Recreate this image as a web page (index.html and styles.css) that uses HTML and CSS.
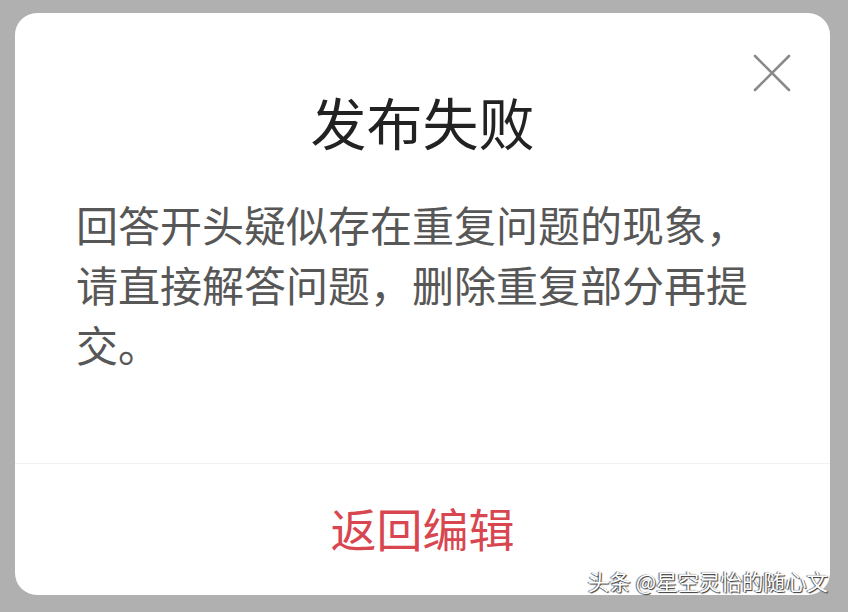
FILE: index.html
```html
<!DOCTYPE html>
<html lang="zh-CN">

<head>
    <meta charset="UTF-8">
    <meta name="viewport" content="width=device-width, initial-scale=1.0">
    <title>发布失败</title>
    <link rel="stylesheet" href="styles.css">
</head>

<body>

    <div class="dialog">
        <button class="close" aria-label="关闭">
            <svg width="38" height="38" viewBox="0 0 38 38">
                <path d="M2 2 L36 36 M36 2 L2 36" stroke="#8a8a8a" stroke-width="2.6" stroke-linecap="round" fill="none" />
            </svg>
        </button>

        <h1 class="title">发布失败</h1>

        <p class="message">回答开头疑似存在重复问题的现象，请直接解答问题，删除重复部分再提交。</p>

        <div class="actions">
            <button class="back">返回编辑</button>
        </div>
    </div>

    <!-- 水印 -->
    <div class="watermark">头条 @星空灵怡的随心文</div>

</body>

</html>
```

FILE: styles.css
```css
body {
    font-family: "Noto Sans CJK SC", "Noto Sans", sans-serif;
    margin: 0;
    padding: 0;
    width: 848px;
    height: 612px;
    background-color: #b0b0b0;
    position: relative;
    overflow: hidden;
}

.dialog {
    position: relative;
    width: 815px;
    height: 582px;
    margin: 13px 0 0 15px;
    background-color: #fff;
    border-radius: 22px;
    display: flex;
    flex-direction: column;
}

.close {
    position: absolute;
    top: 41px;
    right: 39px;
    width: 38px;
    height: 38px;
    padding: 0;
    border: none;
    background: none;
}

.close svg {
    display: block;
}

.title {
    margin: 0;
    padding-top: 74px;
    font-size: 56px;
    font-weight: normal;
    line-height: 67px;
    text-align: center;
    color: #222;
}

.message {
    margin: 0;
    padding: 40px 61px 0 61px;
    height: 269px;
    font-size: 42px;
    line-height: 60px;
    color: #575757;
}

.actions {
    flex: 1;
    display: flex;
    align-items: center;
    justify-content: center;
    padding-bottom: 6px;
    border-top: 1px solid #f1f1f1;
}

.back {
    font-family: inherit;
    font-size: 46px;
    color: #d8464f;
    background: none;
    border: none;
    padding: 0;
    line-height: 60px;
}

.watermark {
    position: absolute;
    right: 20px;
    top: 566px;
    font-size: 21.5px;
    line-height: 30px;
    color: #fff;
    text-shadow: 1px 1px 1px #333, -1px 0 1px #555;
}
```
